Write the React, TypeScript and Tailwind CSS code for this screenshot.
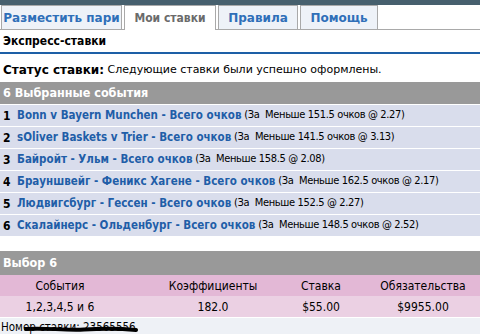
import React from "react";

const rows = [
  { n: 1, t: "Bonn v Bayern Munchen - Всего очков", d: "(За\u00a0 Меньше 151.5 очков @ 2.27)" },
  { n: 2, t: "sOliver Baskets v Trier - Всего очков", d: "(За\u00a0 Меньше 141.5 очков @ 3.13)" },
  { n: 3, t: "Байройт - Ульм - Всего очков", d: "(За\u00a0 Меньше 158.5 @ 2.08)" },
  { n: 4, t: "Брауншвейг - Феникс Хагене - Всего очков", d: "(За\u00a0 Меньше 162.5 очков @ 2.17)" },
  { n: 5, t: "Людвигсбург - Гессен - Всего очков", d: "(За\u00a0 Меньше 152.5 @ 2.27)" },
  { n: 6, t: "Скалайнерс - Ольденбург - Всего очков", d: "(За\u00a0 Меньше 148.5 очков @ 2.52)" },
];

const cond = { fontFamily: "'DejaVu Sans Condensed', 'DejaVu Sans', sans-serif" };

export default function App() {
  return (
    <div
      className="w-[480px] h-[334px] overflow-hidden bg-white text-[11px] text-black"
      style={{ fontFamily: "'DejaVu Sans', Verdana, sans-serif" }}
    >
      <div className="h-[5px] bg-[#47606e]" />
      <div className="flex items-end h-[25px] border-b border-[#a9a9a9] text-[12px]">
        <div className="ml-px h-[24px] w-[121px] flex items-center justify-center border border-b-0 border-[#a9a9a9] bg-[#eef2f8] font-bold text-[#2f6fb8]">
          Разместить пари
        </div>
        <div className="ml-[2px] h-[25px] -mb-px w-[92px] flex items-center justify-center border border-b-0 border-[#a9a9a9] bg-white font-bold text-[#6b6b6b]" style={cond}>
          Мои ставки
        </div>
        <div className="ml-[2px] h-[24px] w-[80px] flex items-center justify-center border border-b-0 border-[#a9a9a9] bg-[#eef2f8] font-bold text-[#2f6fb8]">
          Правила
        </div>
        <div className="ml-[2px] h-[24px] w-[78px] flex items-center justify-center border border-b-0 border-[#a9a9a9] bg-[#eef2f8] font-bold text-[#2f6fb8]">
          Помощь
        </div>
      </div>
      <div className="h-[24px] flex items-center px-[3px] font-bold text-[12px] border-b-2 border-[#1d5fa6]" style={cond}>
        Экспресс-ставки
      </div>
      <div className="h-[28px] flex items-center px-[3px] pt-[4px] whitespace-nowrap">
        <span className="font-bold text-[12px]">Статус ставки:</span>
        <span>&nbsp;Следующие ставки были успешно оформлены.</span>
      </div>
      <div className="h-[22px] flex items-center px-[3px] bg-[#999999] text-white font-bold text-[12.5px]" style={cond}>
        6 Выбранные события
      </div>
      <div className="flex flex-col">
        {rows.map((r) => (
          <div
            key={r.n}
            className="h-[22px] flex items-center px-[3px] bg-[#d9ddec] border-t border-white whitespace-nowrap"
            style={cond}
          >
            <span className="font-bold text-[12px] w-[14px] shrink-0">{r.n}</span>
            <span className="font-bold text-[11.5px] text-[#1f5ea8]">{r.t}</span>
            <span className="text-[11px] tracking-[-0.35px]">&nbsp;{r.d}</span>
          </div>
        ))}
      </div>
      <div className="h-[15px]" />
      <div className="h-[24px] flex items-center px-[3px] bg-[#999999] text-white font-bold text-[12.5px]" style={cond}>
        Выбор 6
      </div>
      <div className="grid grid-cols-[120px_186px_30px_144px] h-[21px] items-center bg-[#e3b8d6] text-[12px] whitespace-nowrap" style={cond}>
        <div className="flex justify-center">События</div>
        <div className="flex justify-center">Коэффициенты</div>
        <div className="flex justify-center">Ставка</div>
        <div className="flex justify-center pl-[30px]">Обязательства</div>
      </div>
      <div className="grid grid-cols-[120px_186px_30px_144px] h-[21px] items-center bg-[#ebd0e3] text-[12px] whitespace-nowrap" style={cond}>
        <div className="flex justify-center">1,2,3,4,5 и 6</div>
        <div className="flex justify-center">182.0</div>
        <div className="flex justify-center">$55.00</div>
        <div className="flex justify-center pl-[30px]">$9955.00</div>
      </div>
      <div className="relative h-[19px] mt-px flex items-center px-[1px] bg-[#eef1f6]" style={cond}>
        <span className="text-[11.5px]">Номер ставки: 23565556</span>
        <svg className="absolute left-[24px] top-[7px]" width="114" height="9" viewBox="0 0 114 9">
          <path d="M2 4 C 20 2.5, 40 5.5, 60 4.5 S 95 3.5, 112 5" stroke="black" strokeWidth="4" fill="none" strokeLinecap="round" />
        </svg>
      </div>
    </div>
  );
}
